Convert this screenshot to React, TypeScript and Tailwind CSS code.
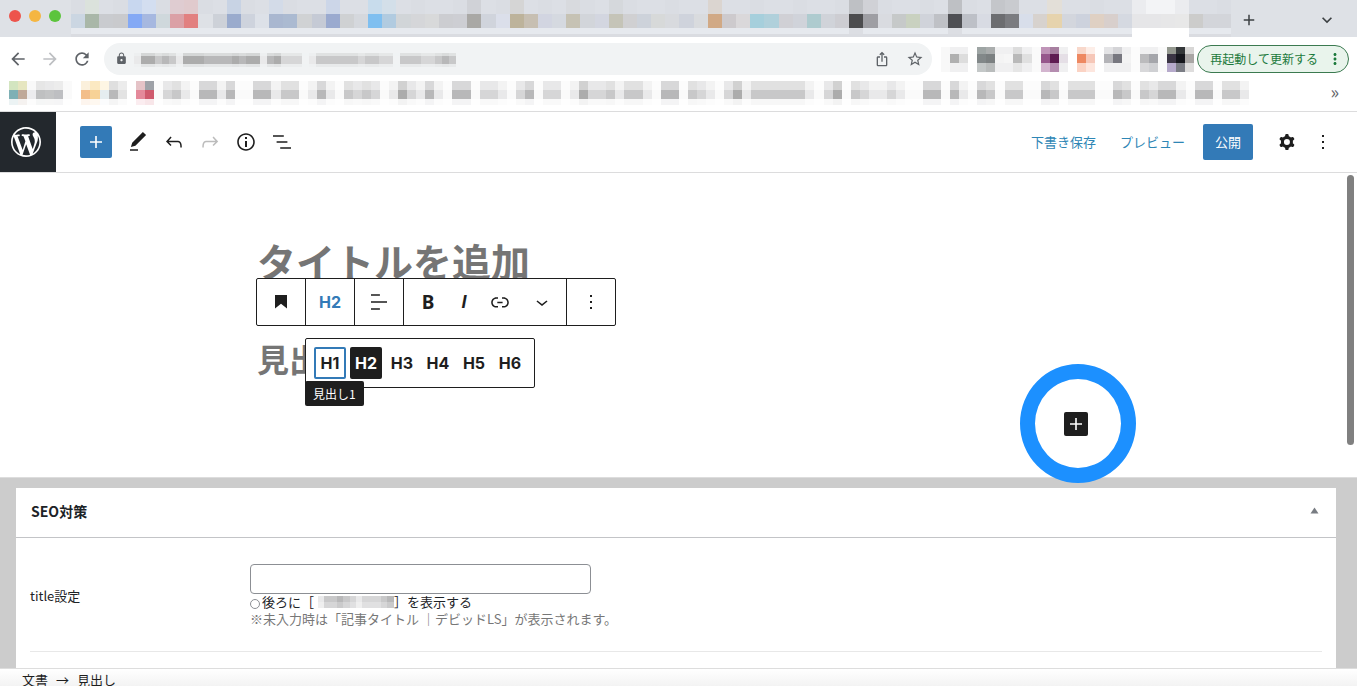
import React from "react";
import {
  MdAdd,
  MdArrowBack,
  MdArrowForward,
  MdIosShare,
  MdKeyboardArrowDown,
  MdLock,
  MdMoreVert,
  MdRefresh,
  MdStarBorder,
} from "react-icons/md";

/* ---------- Pixelated strips ---------- */

function grays(levels: string): string[] {
  const tone: Record<string, string> = {
    a: "acacac",
    b: "b8b8b9",
    c: "c8c8c9",
    d: "d6d6d7",
    e: "e9e9ea",
    f: "fafafa",
  };
  return levels.split("").map((l) => tone[l]);
}

type Row = { y: number; h: number; colors: string[]; opacity?: number };

function Mosaic({ pitch, rows, height }: { pitch: number; rows: Row[]; height: number }) {
  const count = Math.max(...rows.map((r) => r.colors.length));
  const width = Math.round(count * pitch);
  return (
    <svg aria-hidden="true" width={width} height={height} shapeRendering="crispEdges" className="block shrink-0">
      {rows.map((r, n) =>
        r.colors.map((c, i) => (
          <rect
            key={`${n}-${i}`}
            x={Math.round(i * pitch)}
            y={r.y}
            width={Math.round((i + 1) * pitch) - Math.round(i * pitch)}
            height={r.h}
            fill={`#${c}`}
            fillOpacity={r.opacity ?? 1}
          />
        )),
      )}
    </svg>
  );
}

const TAB_MID = (
  "cbd6e2 a9b7a8 c9cbcf c9cacd 84a9f5 a6b8e0 cfd8dc dba0a6 e28080 dee1e6 cdd1d8 9aabcd ced3dd dde1e8 a9b7d0 abbad1 " +
  "d0d2d4 c5cad5 9aaacf cfd1d3 d5d8dd 7fbff0 b1cbe0 d1d5d8 d5d6d9 d8d9da cccdd1 cdced3 a9a8a5 d0d4dc dbdfea bdb39b " +
  "c7bfb2 d2d5e1 d5d9e0 c6c2b4 d2d5da d3d6e0 c5c4b8 d0d0d2 cdd2da d7d9d9 d8dade cfd3dc d9dbde d1a985 cdcacd dad8da " +
  "a6cfdc b0d0db d0d0d5 d0d3da aecbcf d0d3d9 cdcdd2 4c4c4e 9e9ea3 d9dbe0 c6c9c9 c9d1c0 d0d3da bfc1c6 4e4f53 bdc0c7 " +
  "d8dbe3 6c6d70 7b7c80 d8deea d7d2ce e6d3ad d3d6dd cdd2dd dfd0c3 d8cfcc d5d9e1 e6e6e8 e6e6e8 e7e7e8 e8e8e8 cccccb d3d5da d3d5da"
).split(" ");

const TAB_TOP_SPECIAL: Record<number, string> = {
  1: "dbe2dc", 4: "c8d7ef", 5: "d3def0", 7: "dfccd1", 8: "e0cacd", 11: "c8d3e4", 14: "d3dbe8", 18: "ccd6e8",
  21: "c8dcec", 22: "d3dfe9", 28: "d0d2d7", 31: "d5d5d5", 35: "d8dade", 38: "d5d8dc", 45: "dbd5d0", 55: "bec0c4",
  56: "d0d1d6", 62: "bec0c4", 65: "c4c6ca", 66: "c9cbcf", 69: "e3dfd8", 75: "ebecef", 76: "f3f4f6", 77: "f3f4f6", 78: "ebecef",
};
const TAB_TOP = TAB_MID.map((_, i) => TAB_TOP_SPECIAL[i] ?? (i % 3 === 0 ? "dadde3" : "dcdfe5"));
const TAB_LOW = TAB_MID.map((_, i) => (i > 74 && i < 79 ? "ffffff" : i === 55 || i === 62 ? "dcdee3" : "e6e9ee"));
const TAB_EDGE = TAB_LOW.map((c) => (c === "ffffff" ? c : "dadce1"));

const BOOK_MID = "7eb0b5 bfa999 ececee bfc0c1 c3c4c5 bebfc2 fafafa ffffff f3be8a f7d297 e5edf0 b9b9ba e3e3e3 ffffff e4899a cf5a6d"
  .split(" ")
  .concat(
    grays(
      "fdcef" + "bbebff" + "bbeccf" + "ebefcdcd" + "feadebef" + "bbfddef" + "dbfddf" + "eaddceccef" + "bbfcdef" +
        "daecccccce" + "fdafcdeedeff" + "bbfbef" + "bcfccff" + "bcfcccff" + "bcfcdbbef" + "bbfcce",
    ),
  );
const BOOK_TOP = "d3e5c0 e6e6c0 f9f9f9 e6e6e6 e9e9ea ececec fafafa ffffff fbf0dc fbe9c2 fef5e4 dfdfdf ececec ffffff e5c3c7 9fa3a8"
  .split(" ");

const URL_CELLS = grays("eaacbceaaabbbbabaaebadddfeccccccdccddfcccddcbc").map((c) => (c === "fafafa" ? "f1f3f4" : c));

const EXT_MID = (
  "f8f8f8 b0b0b0 dddddd ffffff 828889 7b8081 f4f4f4 f6f6f6 b9b9b9 e0e0e0 fafafa 96578c 5f1c52 e5dfe6 ffffff ee8861 f6c7b8 ffffff " +
  "b4b4b8 77777f f3f3f3 fcfcfc bbbbbd a5a6ab fafafa 3b3544 15161c a9a6a5"
).split(" ");
const blend = (special: Record<number, string>) =>
  EXT_MID.map((c, i) => special[i] ?? (["ffffff", "fafafa", "fcfcfc", "f8f8f8"].includes(c) ? c : "f0f0f1"));
const EXT_TOP = blend({
  4: "9ea5a4", 5: "aaadad", 8: "dddddd", 11: "bf94b8", 12: "a77fa0", 15: "f8d8cb", 16: "fdeee8", 18: "e4e4e6", 19: "d4d4d7", 25: "94988f", 26: "343739", 27: "d8d7d6",
});
const EXT_LOW = blend({
  4: "c4c8c8", 5: "b9bcbc", 8: "e6e6e6", 11: "d3b5cf", 12: "b58db0", 15: "fbd3c4", 16: "fde6de", 22: "d8d8da", 23: "cfd0d3", 25: "b6aacb", 26: "7b7d85", 27: "dedddd",
});

/* ---------- Icons ---------- */

function Icon({ d, size = 24, className = "" }: { d: string; size?: number; className?: string }) {
  return (
    <svg aria-hidden="true" viewBox="0 0 24 24" width={size} height={size} fill="currentColor" fillRule="evenodd" className={className}>
      <path d={d} />
    </svg>
  );
}

const ICONS = {
  plus: "M18 11.2h-5.2V6h-1.6v5.2H6v1.6h5.2V18h1.6v-5.2H18z",
  edit: "M20.1 5.1L16.9 2 6.2 12.7l-1.3 4.4 4.5-1.3L20.1 5.1zM4 20.8h8v-1.5H4v1.5z",
  undo: "M18.3 11.7c-.6-.6-1.4-.9-2.3-.9H6.7l2.9-3.3-1.1-1-4.5 5L8.5 16l1-1-2.7-2.7H16c.5 0 .9.2 1.3.5 1 1 1 3.4 1 4.5v.3h1.5v-.2c0-1.5 0-4.3-1.5-5.7z",
  redo: "M15.6 6.5l-1.1 1 2.9 3.3H8c-.9 0-1.7.3-2.3.9-1.4 1.5-1.4 4.2-1.4 5.6v.2h1.5v-.3c0-1.1 0-3.5 1-4.5.3-.3.7-.5 1.3-.5h9.2L14.5 15l1.1 1.1 4.6-4.6-4.6-5z",
  info: "M12 3.2c-4.8 0-8.8 3.9-8.8 8.8 0 4.8 3.9 8.8 8.8 8.8 4.8 0 8.8-3.9 8.8-8.8 0-4.8-4-8.8-8.8-8.8zm0 16c-4 0-7.2-3.3-7.2-7.2C4.8 8 8 4.8 12 4.8s7.2 3.3 7.2 7.2c0 4-3.2 7.2-7.2 7.2zM11 17h2v-6h-2v6zm0-8h2V7h-2v2z",
  list: "M13.8 5.2H3v1.5h10.8V5.2zm-3.6 12v1.5H21v-1.5H10.2zm7.2-6H6.6v1.5h10.8v-1.5z",
  cog: "M10.289 4.836A1 1 0 0111.275 4h1.306a1 1 0 01.987.836l.244 1.466c.787.26 1.503.679 2.108 1.218l1.393-.522a1 1 0 011.216.437l.653 1.13a1 1 0 01-.23 1.273l-1.148.944a6.025 6.025 0 010 2.435l1.149.946a1 1 0 01.23 1.272l-.653 1.13a1 1 0 01-1.216.437l-1.394-.522c-.605.54-1.32.958-2.108 1.218l-.244 1.466a1 1 0 01-.987.836h-1.306a1 1 0 01-.986-.836l-.244-1.466a5.995 5.995 0 01-2.108-1.218l-1.394.522a1 1 0 01-1.217-.436l-.653-1.131a1 1 0 01.23-1.272l1.149-.946a6.026 6.026 0 010-2.435l-1.148-.944a1 1 0 01-.23-1.272l.653-1.131a1 1 0 011.217-.437l1.393.522a5.994 5.994 0 012.108-1.218l.244-1.466zM14.929 12a3 3 0 11-6 0 3 3 0 016 0z",
  more: "M13 19h-2v-2h2v2zm0-6h-2v-2h2v2zm0-6h-2V5h2v2z",
  heading: "M6 5V18.5911L12 13.8473L18 18.5911V5H6Z",
  align: "M4 19.8h8.9v-1.5H4v1.5zm8.9-15.6H4v1.5h8.9V4.2zm-8.9 7v1.5h16v-1.5H4z",
  link: "M15.6 7.2H14v1.5h1.6c2 0 3.7 1.7 3.7 3.7s-1.7 3.7-3.7 3.7H14v1.5h1.6c2.8 0 5.2-2.3 5.2-5.2 0-2.9-2.3-5.2-5.2-5.2zM4.7 12.4c0-2 1.7-3.7 3.7-3.7H10V7.2H8.4c-2.9 0-5.2 2.3-5.2 5.2 0 2.9 2.3 5.2 5.2 5.2H10v-1.5H8.4c-2 0-3.7-1.7-3.7-3.7zm4.6.9h5.3v-1.5H9.3v1.5z",
  chevron: "M17.5 11.6L12 16l-5.5-4.4.9-1.2L12 14l4.5-3.6 1 1.2z",
};

function WordPressLogo() {
  return (
    <svg aria-hidden="true" viewBox="-2 -2 24 24" width={36} height={36} fill="currentColor">
      <path d="M20 10c0-5.51-4.49-10-10-10C4.48 0 0 4.49 0 10c0 5.52 4.48 10 10 10 5.51 0 10-4.48 10-10zM7.78 15.37L4.37 6.22c.55-.02 1.17-.08 1.17-.08.5-.06.44-1.13-.06-1.11 0 0-1.45.11-2.37.11-.18 0-.37 0-.58-.01C4.12 2.69 6.87 1.11 10 1.11c2.33 0 4.45.87 6.05 2.34-.68-.11-1.65.39-1.65 1.58 0 .74.45 1.36.9 2.1.35.61.55 1.36.55 2.46 0 1.49-1.4 5-1.4 5l-3.03-8.37c.54-.02.82-.17.82-.17.5-.05.44-1.25-.06-1.22 0 0-1.44.12-2.38.12-.87 0-2.33-.12-2.33-.12-.5-.03-.56 1.2-.06 1.22l.92.08 1.26 3.41zM17.41 10c.24-.64.74-1.87.43-4.25.7 1.29 1.05 2.71 1.05 4.25 0 3.29-1.73 6.24-4.4 7.78.97-2.59 1.94-5.2 2.92-7.78zM6.1 18.09C3.12 16.65 1.11 13.53 1.11 10c0-1.3.23-2.48.72-3.59C3.25 10.3 4.67 14.2 6.1 18.09zm4.03-6.63l2.58 6.98c-.86.29-1.76.45-2.71.45-.79 0-1.57-.11-2.29-.33.81-2.38 1.62-4.74 2.42-7.1z" />
    </svg>
  );
}

/* ---------- Browser chrome ---------- */

function TabStrip() {
  return (
    <div className="flex h-[37px] items-start bg-[#dee1e6]">
      <div className="flex w-[71px] shrink-0 gap-2 pt-2.5 pl-[9px]">
        <span className="size-3 rounded-full bg-[#ed544c]" />
        <span className="size-3 rounded-full bg-[#f5b642]" />
        <span className="size-3 rounded-full bg-[#5cc43c]" />
      </div>
      <Mosaic
        pitch={14.15}
        height={37}
        rows={[
          { y: 0, h: 14, colors: TAB_TOP },
          { y: 14, h: 14, colors: TAB_MID },
          { y: 28, h: 6, colors: TAB_LOW },
          { y: 34, h: 3, colors: TAB_EDGE },
        ]}
      />
      <div className="flex flex-1 items-center justify-between pt-2.5 pr-5 pl-[9px] text-[#3c4043]">
        <button aria-label="新しいタブ">
          <MdAdd size={18} />
        </button>
        <button aria-label="タブを検索">
          <MdKeyboardArrowDown size={20} />
        </button>
      </div>
    </div>
  );
}

function AddressBar() {
  return (
    <div className="flex h-[43px] items-center bg-white pr-2 pl-2 text-[#5f6368]">
      <button aria-label="戻る" className="flex w-8 shrink-0">
        <MdArrowBack size={20} />
      </button>
      <button aria-label="進む" className="flex w-8 shrink-0 text-[#bdbfc2]">
        <MdArrowForward size={20} />
      </button>
      <button aria-label="再読み込み" className="flex w-8 shrink-0">
        <MdRefresh size={20} />
      </button>
      <div className="flex h-8 flex-1 items-center rounded-full bg-[#f1f3f4] pr-2">
        <MdLock size={13} className="mr-1.5 ml-[11px]" />
        <Mosaic
          pitch={7}
          height={16}
          rows={[
            { y: 2, h: 3, colors: URL_CELLS, opacity: 0.4 },
            { y: 5, h: 8, colors: URL_CELLS },
            { y: 13, h: 3, colors: URL_CELLS, opacity: 0.2 },
          ]}
        />
        <div className="ml-auto flex gap-4">
          <button aria-label="共有">
            <MdIosShare size={16} />
          </button>
          <button aria-label="ブックマークに追加">
            <MdStarBorder size={18} />
          </button>
        </div>
      </div>
      <div className="mr-[3px] ml-[9px] pt-0.5">
        <Mosaic
          pitch={9.05}
          height={25}
          rows={[
            { y: 0, h: 7, colors: EXT_TOP },
            { y: 7, h: 9, colors: EXT_MID },
            { y: 16, h: 9, colors: EXT_LOW },
          ]}
        />
      </div>
      <button className="flex h-7 items-center gap-2 rounded-full border border-[#3b7a50] bg-[#e9f4ec] pr-1 pl-3 text-[12px] text-[#1c7a3c]">
        再起動して更新する
        <MdMoreVert size={18} />
      </button>
    </div>
  );
}

function BookmarkBar() {
  return (
    <div className="flex h-8 items-start border-b border-[#dcdcdd] bg-white pt-px pr-[18px] pl-[9px]">
      <Mosaic
        pitch={9.05}
        height={24}
        rows={[
          { y: 0, h: 9, colors: BOOK_MID.map((c, i) => BOOK_TOP[i] ?? c).map((c, i) => (i < BOOK_TOP.length ? c : "ffffff")) },
          { y: 0, h: 9, colors: BOOK_MID.map((c, i) => (i < BOOK_TOP.length ? BOOK_TOP[i] : c)), opacity: 0.55 },
          { y: 9, h: 9, colors: BOOK_MID },
          { y: 18, h: 6, colors: BOOK_MID, opacity: 0.15 },
        ]}
      />
      <button aria-label="その他のブックマーク" className="ml-auto text-[18px] leading-5 text-[#5f6368]">
        »
      </button>
    </div>
  );
}

/* ---------- Editor header ---------- */

function ToolButton({ label, d, className = "" }: { label: string; d: string; className?: string }) {
  return (
    <button aria-label={label} className={`flex size-9 items-center justify-center ${className}`}>
      <Icon d={d} />
    </button>
  );
}

function EditorHeader() {
  return (
    <header className="flex h-[61px] items-center border-b border-[#dcdcdd] bg-white text-[#1e1e1e]">
      <a href="#posts" aria-label="投稿一覧" className="flex h-full w-14 shrink-0 items-center justify-center bg-[#23282d] pr-1 text-white">
        <WordPressLogo />
      </a>
      <button aria-label="ブロックを追加" className="mr-2 ml-6 flex size-8 items-center justify-center rounded-[2px] bg-[#337ab7] text-white">
        <Icon d={ICONS.plus} />
      </button>
      <ToolButton label="ツール" d={ICONS.edit} />
      <ToolButton label="元に戻す" d={ICONS.undo} />
      <ToolButton label="やり直す" d={ICONS.redo} className="text-[#bcbcbc]" />
      <ToolButton label="詳細" d={ICONS.info} />
      <ToolButton label="リスト表示" d={ICONS.list} />
      <div className="ml-auto flex items-center pr-4 text-[13px]">
        <button className="mr-6 text-[#2e86b5]">下書き保存</button>
        <button className="mr-[18px] text-[#2e86b5]">プレビュー</button>
        <button className="mr-4 h-9 rounded-[2px] bg-[#337ab7] px-3 text-white">公開</button>
        <ToolButton label="設定" d={ICONS.cog} />
        <ToolButton label="オプション" d={ICONS.more} />
      </div>
    </header>
  );
}

/* ---------- Canvas ---------- */

function BlockToolbar() {
  return (
    <div
      role="toolbar"
      aria-label="ブロックツール"
      className="absolute top-[105px] -left-px flex h-12 divide-x divide-[#1e1e1e] rounded-[2px] border border-[#1e1e1e] bg-white text-[#1e1e1e]"
    >
      <button aria-label="見出し" className="flex w-[49px] items-center justify-center">
        <Icon d={ICONS.heading} />
      </button>
      <button className="w-[49px] font-[Inter] text-[16px] font-bold text-[#337ab7]">H2</button>
      <button aria-label="配置" className="flex w-[49px] items-center justify-center">
        <Icon d={ICONS.align} />
      </button>
      <div className="flex items-center pl-1.5">
        <button aria-label="太字" className="h-9 w-9 font-['Noto_Sans'] text-[19px] leading-9 font-bold">
          B
        </button>
        <button aria-label="イタリック" className="h-9 w-9 font-['Liberation_Sans'] text-[18px] leading-9 font-bold italic">
          I
        </button>
        <ToolButton label="リンク" d={ICONS.link} />
        <button aria-label="さらに表示" className="flex h-9 w-12 items-center justify-center">
          <Icon d={ICONS.chevron} />
        </button>
      </div>
      <button aria-label="オプション" className="flex w-12 items-center justify-center">
        <Icon d={ICONS.more} />
      </button>
    </div>
  );
}

function HeadingLevels() {
  return (
    <div className="absolute top-[165px] left-12 flex gap-1 rounded-[2px] border border-[#1e1e1e] bg-white p-2 font-[Inter] text-[16px] font-bold text-[#1e1e1e]">
      <button className="size-8 rounded-[2px] border-2 border-[#337ab7]">H1</button>
      <button className="size-8 rounded-[2px] bg-[#1e1e1e] text-white">H2</button>
      <button className="size-8">H3</button>
      <button className="size-8">H4</button>
      <button className="size-8">H5</button>
      <button className="size-8">H6</button>
      <span
        role="tooltip"
        className="absolute top-[42px] -left-px rounded-[2px] bg-[#1e1e1e] px-2 font-['Noto_Sans_CJK_JP',sans-serif] text-[12px] leading-[25px] font-normal whitespace-nowrap text-white"
      >
        見出し1
      </span>
    </div>
  );
}

function Canvas() {
  return (
    <section className="relative bg-white pr-3 pb-[41px]">
      <div className="relative mx-auto max-w-[831px] pt-[57px]">
        <h1 className="text-[39px] leading-[60px] font-bold text-[#757575]">タイトルを追加</h1>
        <h2 className="mt-11 text-[32px] leading-[48px] font-bold text-[#757575]">見出し</h2>
        <div className="mt-[30px] flex justify-end">
          <div className="relative flex">
            <button aria-label="ブロックを追加" className="flex size-6 items-center justify-center rounded-[2px] bg-[#1e1e1e] text-white">
              <Icon d={ICONS.plus} />
            </button>
            <span className="pointer-events-none absolute -top-12 -left-11 z-10 h-[119px] w-[116px] rounded-[50%] border-[15px] border-[#1c90ff]" />
          </div>
        </div>
        <BlockToolbar />
        <HeadingLevels />
      </div>
      <span className="absolute top-0.5 right-[3px] h-[270px] w-[7px] rounded-full bg-[#808080]" />
    </section>
  );
}

/* ---------- Meta box ---------- */

const HIDDEN_NAME = grays("eccbcdedddcb");

function SeoPanel() {
  return (
    <section className="min-h-0 flex-1 overflow-hidden border-t border-[#dddddd] bg-[#cccccc] pt-2.5 pr-[21px] pl-4">
      <div className="h-full bg-white">
        <div className="flex h-[50px] items-center justify-between border-b border-[#c3c4c7] pr-[17px] pb-0.5 pl-[15px]">
          <h2 className="text-[14px] font-bold text-[#1d2327]">SEO対策</h2>
          <button aria-label="パネルを閉じる" className="pb-0.5 text-[#787c82]">
            <svg aria-hidden="true" width="9" height="7" viewBox="0 0 9 7" fill="currentColor">
              <path d="M4.5 0.5L8.5 6.5H0.5Z" />
            </svg>
          </button>
        </div>
        <div className="mx-3.5 grid grid-cols-[220px_1fr] items-center border-b border-[#e8e8e8] pt-[26px] pb-[23px] text-[13px] text-[#1d2327]">
          <label htmlFor="seo-title">title設定</label>
          <div>
            <input id="seo-title" type="text" className="block h-[30px] w-[341px] rounded-[4px] border border-[#8c8f94] bg-white px-2" />
            <div className="flex h-4 items-center">
              <input
                id="seo-suffix"
                type="checkbox"
                className="mt-1 mr-0.5 size-2.5 appearance-none rounded-full border border-[#8c8f94] bg-white"
              />
              <label htmlFor="seo-suffix" className="flex items-center leading-4">
                後ろに［
                <span className="ml-1">
                  <Mosaic
                    pitch={6.3}
                    height={12}
                    rows={[
                      { y: 0, h: 6, colors: HIDDEN_NAME },
                      { y: 6, h: 6, colors: HIDDEN_NAME, opacity: 0.75 },
                    ]}
                  />
                </span>
                ］を表示する
              </label>
            </div>
            <p className="leading-[18px] text-[#777777]">※未入力時は「記事タイトル ｜デビッドLS」が表示されます。</p>
          </div>
        </div>
      </div>
    </section>
  );
}

export default function App() {
  return (
    <div className="flex h-screen flex-col overflow-hidden bg-white font-['Noto_Sans_CJK_JP',sans-serif]">
      <TabStrip />
      <AddressBar />
      <BookmarkBar />
      <EditorHeader />
      <Canvas />
      <SeoPanel />
      <footer className="h-[18px] shrink-0 border-t border-[#dddddd] bg-linear-to-b from-white to-[#f3f3f3] pt-[5px] pl-[22px] text-[13px] leading-3 text-[#1e1e1e]">
        <nav aria-label="ブロックパンくずリスト" className="flex gap-2">
          <a href="#document">文書</a>
          <span>→</span>
          <a href="#heading">見出し</a>
        </nav>
      </footer>
    </div>
  );
}
